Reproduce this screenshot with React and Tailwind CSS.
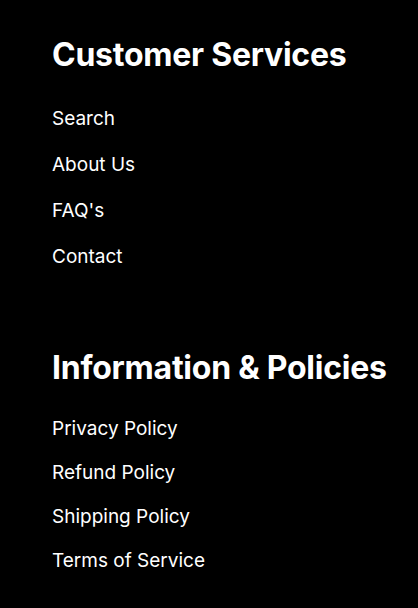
const sections = [
  {
    title: 'Customer Services',
    links: ['Search', 'About Us', "FAQ's", 'Contact'],
    list: 'mt-[30px] gap-[18px]',
    wrap: 'mb-[77px]',
  },
  {
    title: 'Information & Policies',
    links: ['Privacy Policy', 'Refund Policy', 'Shipping Policy', 'Terms of Service'],
    list: 'mt-[27px] gap-4',
    wrap: '',
  },
];

export default function App() {
  return (
    <div className="min-h-[608px] w-[418px] bg-black text-white font-['Inter',sans-serif] pl-[52px] pt-[35px]">
      {sections.map(s => (
        <div key={s.title} className={s.wrap}>
          <h2 className="text-[32px] font-bold leading-[40px] tracking-[-0.25px] whitespace-nowrap">{s.title}</h2>
          <ul className={`flex flex-col ${s.list}`}>
            {s.links.map(l => (
              <li key={l} className="text-[19px] leading-[28px]">
                <a href="#">{l}</a>
              </li>
            ))}
          </ul>
        </div>
      ))}
    </div>
  );
}
